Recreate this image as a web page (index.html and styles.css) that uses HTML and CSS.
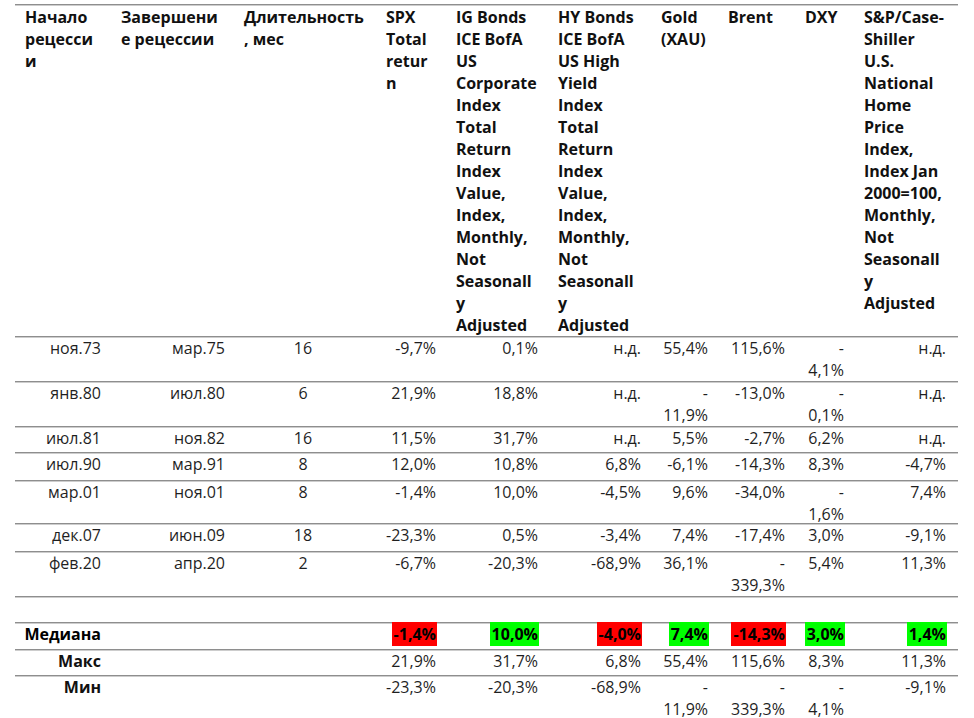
FILE: index.html
```html
<!DOCTYPE html>
<html lang="ru">
<head>
<meta charset="utf-8">
<title>Рецессии</title>
<link rel="stylesheet" href="styles.css">
</head>
<body>
<div class="sheet">
  <div class="row head">
    <div class="c">Начало<br>рецесси<br>и</div>
    <div class="c">Завершени<br>е рецессии</div>
    <div class="c">Длительность<br>, мес</div>
    <div class="c">SPX<br>Total<br>retur<br>n</div>
    <div class="c">IG Bonds<br>ICE BofA<br>US<br>Corporate<br>Index<br>Total<br>Return<br>Index<br>Value,<br>Index,<br>Monthly,<br>Not<br>Seasonall<br>y<br>Adjusted</div>
    <div class="c">HY Bonds<br>ICE BofA<br>US High<br>Yield<br>Index<br>Total<br>Return<br>Index<br>Value,<br>Index,<br>Monthly,<br>Not<br>Seasonall<br>y<br>Adjusted</div>
    <div class="c">Gold<br>(XAU)</div>
    <div class="c">Brent</div>
    <div class="c">DXY</div>
    <div class="c">S&amp;P/Case-<br>Shiller<br>U.S.<br>National<br>Home<br>Price<br>Index,<br>Index Jan<br>2000=100,<br>Monthly,<br>Not<br>Seasonall<br>y<br>Adjusted</div>
  </div>

  <div class="row data h45">
    <div class="c">ноя.73</div><div class="c">мар.75</div><div class="c mid">16</div>
    <div class="c">-9,7%</div><div class="c">0,1%</div><div class="c">н.д.</div>
    <div class="c">55,4%</div><div class="c">115,6%</div><div class="c">-<br>4,1%</div><div class="c">н.д.</div>
  </div>
  <div class="row data h45">
    <div class="c">янв.80</div><div class="c">июл.80</div><div class="c mid">6</div>
    <div class="c">21,9%</div><div class="c">18,8%</div><div class="c">н.д.</div>
    <div class="c">-<br>11,9%</div><div class="c">-13,0%</div><div class="c">-<br>0,1%</div><div class="c">н.д.</div>
  </div>
  <div class="row data h26">
    <div class="c">июл.81</div><div class="c">ноя.82</div><div class="c mid">16</div>
    <div class="c">11,5%</div><div class="c">31,7%</div><div class="c">н.д.</div>
    <div class="c">5,5%</div><div class="c">-2,7%</div><div class="c">6,2%</div><div class="c">н.д.</div>
  </div>
  <div class="row data h28">
    <div class="c">июл.90</div><div class="c">мар.91</div><div class="c mid">8</div>
    <div class="c">12,0%</div><div class="c">10,8%</div><div class="c">6,8%</div>
    <div class="c">-6,1%</div><div class="c">-14,3%</div><div class="c">8,3%</div><div class="c">-4,7%</div>
  </div>
  <div class="row data h43">
    <div class="c">мар.01</div><div class="c">ноя.01</div><div class="c mid">8</div>
    <div class="c">-1,4%</div><div class="c">10,0%</div><div class="c">-4,5%</div>
    <div class="c">9,6%</div><div class="c">-34,0%</div><div class="c">-<br>1,6%</div><div class="c">7,4%</div>
  </div>
  <div class="row data h28">
    <div class="c">дек.07</div><div class="c">июн.09</div><div class="c mid">18</div>
    <div class="c">-23,3%</div><div class="c">0,5%</div><div class="c">-3,4%</div>
    <div class="c">7,4%</div><div class="c">-17,4%</div><div class="c">3,0%</div><div class="c">-9,1%</div>
  </div>
  <div class="row data h45">
    <div class="c">фев.20</div><div class="c">апр.20</div><div class="c mid">2</div>
    <div class="c">-6,7%</div><div class="c">-20,3%</div><div class="c">-68,9%</div>
    <div class="c">36,1%</div><div class="c">-<br>339,3%</div><div class="c">5,4%</div><div class="c">11,3%</div>
  </div>
  <div class="row data h26"></div>
  <div class="row data h27 median">
    <div class="c label">Медиана</div><div class="c"></div><div class="c"></div>
    <div class="c"><span class="hl red">-1,4%</span></div>
    <div class="c"><span class="hl green">10,0%</span></div>
    <div class="c"><span class="hl red">-4,0%</span></div>
    <div class="c"><span class="hl green">7,4%</span></div>
    <div class="c"><span class="hl red">-14,3%</span></div>
    <div class="c"><span class="hl green">3,0%</span></div>
    <div class="c"><span class="hl green">1,4%</span></div>
  </div>
  <div class="row data h26">
    <div class="c label">Макс</div><div class="c"></div><div class="c"></div>
    <div class="c">21,9%</div><div class="c">31,7%</div><div class="c">6,8%</div>
    <div class="c">55,4%</div><div class="c">115,6%</div><div class="c">8,3%</div><div class="c">11,3%</div>
  </div>
  <div class="row data h44">
    <div class="c label">Мин</div><div class="c"></div><div class="c"></div>
    <div class="c">-23,3%</div><div class="c">-20,3%</div><div class="c">-68,9%</div>
    <div class="c">-<br>11,9%</div><div class="c">-<br>339,3%</div><div class="c">-<br>4,1%</div><div class="c">-9,1%</div>
  </div>
</div>
</body>
</html>
```

FILE: styles.css
```css
html, body {
  margin: 0;
  padding: 0;
  background: #ffffff;
}

body {
  font-family: "Open Sans", "Noto Sans", "DejaVu Sans", sans-serif;
  font-size: 16px;
  line-height: 22px;
  color: #1f1f1f;
}

.sheet {
  width: 943px;
  margin: 4px 0 0 15px;
}

.row {
  display: grid;
  grid-template-columns: 102px 123px 142px 70px 102px 103px 67px 77px 59px 98px;
  box-sizing: border-box;
  border-top: 1px solid #8e8e8e;
  box-shadow: inset 0 1px 0 #cdcdcd;
  padding-top: 1px;
}

.head {
  height: 332px;
  font-weight: 700;
  color: #111111;
  white-space: nowrap;
}

.head .c {
  padding-left: 4px;
}

.head .c:first-child {
  padding-left: 10px;
}

.data .c {
  text-align: right;
  padding-right: 16px;
  white-space: nowrap;
  margin-top: -1px;
}

.data .c:last-child {
  padding-right: 12px;
}

.data .c.mid {
  text-align: center;
  padding-left: 4px;
  padding-right: 20px;
}

.data .c:nth-child(2) {
  padding-right: 15px;
}

.h45 { height: 45px; }
.h44 { height: 44px; }
.h43 { height: 43px; }
.h28 { height: 28px; }
.h27 { height: 27px; }
.h26 { height: 26px; }

.label {
  font-weight: 700;
  color: #111111;
}

.median .c {
  font-weight: 700;
  color: #000000;
}

.hl {
  display: inline-block;
  height: 24px;
  line-height: 24px;
  padding: 0 1px 0 2px;
  margin-right: -1px;
  margin-top: -1px;
}

.red {
  background: #ff0000;
}

.green {
  background: #00ff00;
}
```
